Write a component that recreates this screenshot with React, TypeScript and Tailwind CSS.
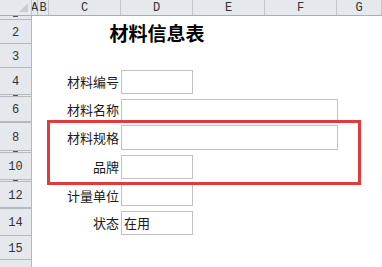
import React from 'react'

type Row = {
  n: string
  h: number
  hidden?: boolean
  title?: boolean
  label?: string
  box?: 'short' | 'long'
  boxH?: number
  value?: string
}

const rows: Row[] = [
  { n: '1', h: 4, hidden: true },
  { n: '2', h: 24, title: true },
  { n: '3', h: 24 },
  { n: '4', h: 27, label: '材料编号', box: 'short', boxH: 24 },
  { n: '5', h: 2, hidden: true },
  { n: '6', h: 25, label: '材料名称', box: 'long', boxH: 22 },
  { n: '7', h: 1, hidden: true },
  { n: '8', h: 28, label: '材料规格', box: 'long', boxH: 25 },
  { n: '9', h: 2, hidden: true },
  { n: '10', h: 27, label: '品牌', box: 'short', boxH: 24 },
  { n: '11', h: 2, hidden: true },
  { n: '12', h: 26, label: '计量单位', box: 'short', boxH: 22 },
  { n: '13', h: 1, hidden: true },
  { n: '14', h: 27, label: '状态', box: 'short', boxH: 24, value: '在用' },
  { n: '15', h: 24 },
  { n: '', h: 24 },
]

const cols = [
  { name: 'A', w: 'w-[6px]' },
  { name: 'B', w: 'w-[11px]' },
  { name: 'C', w: 'w-[72px]' },
  { name: 'D', w: 'w-[72px]' },
  { name: 'E', w: 'w-[72px]' },
  { name: 'F', w: 'w-[72px]' },
  { name: 'G', w: 'flex-1' },
]

const mono = { fontFamily: '"Liberation Mono", "DejaVu Sans Mono", monospace' }

export default function App() {
  return (
    <div
      className="relative w-[382px] h-[267px] overflow-hidden bg-white text-[#1a1a1a]"
      style={{ fontFamily: '"Noto Sans CJK SC", "Noto Sans", sans-serif' }}
    >
      {/* column headers */}
      <div className="flex h-[16px] bg-[#e5e8ed] border-b border-[#a9aeb6]">
        <div className="relative w-[32px] shrink-0 border-r border-[#c3c7cd]">
          <svg className="absolute right-[3px] bottom-[3px]" width="9" height="9" viewBox="0 0 9 9">
            <polygon points="9,0 9,9 0,9" fill="#c9ccd1" />
          </svg>
        </div>
        {cols.map(c => (
          <div
            key={c.name}
            className={`${c.w} shrink-0 border-r border-[#c3c7cd] flex items-center justify-center text-[12px] leading-none text-[#333] overflow-visible`}
            style={mono}
          >
            {c.name}
          </div>
        ))}
      </div>

      {/* sheet rows */}
      {rows.map((r, i) => (
        <div key={i} className="flex" style={{ height: r.h }}>
          {r.hidden ? (
            <div className="w-[32px] shrink-0 bg-[#e5e8ed] border-r border-b border-[#b4b9c0] flex items-start justify-center overflow-hidden">
              <div className="w-[5px] h-px bg-[#555]" />
            </div>
          ) : (
            <div
              className="w-[32px] shrink-0 bg-[#e5e8ed] border-r border-b border-[#b4b9c0] flex items-center justify-center pt-[2px] text-[12px] leading-none text-[#333]"
              style={mono}
            >
              {r.n}
            </div>
          )}
          <div className="flex items-center">
            <div className="w-[17px] shrink-0" />
            {r.title ? (
              <div className="w-[216px] text-center text-[19px] font-bold leading-none text-black">材料信息表</div>
            ) : (
              <>
                <div className="w-[72px] shrink-0 pr-[2px] text-right text-[13px] leading-none whitespace-nowrap">
                  {r.label}
                </div>
                {r.box && (
                  <div
                    className={`${r.box === 'long' ? 'w-[217px]' : 'w-[72px]'} border border-[#c2c2c2] flex items-center pl-[2px] text-[13px] leading-none`}
                    style={{ height: r.boxH }}
                  >
                    {r.value}
                  </div>
                )}
              </>
            )}
          </div>
        </div>
      ))}

      {/* red highlight */}
      <div className="absolute left-[47px] top-[120px] w-[314px] h-[65px] border-[3px] border-[#e2393d]" />
    </div>
  )
}
